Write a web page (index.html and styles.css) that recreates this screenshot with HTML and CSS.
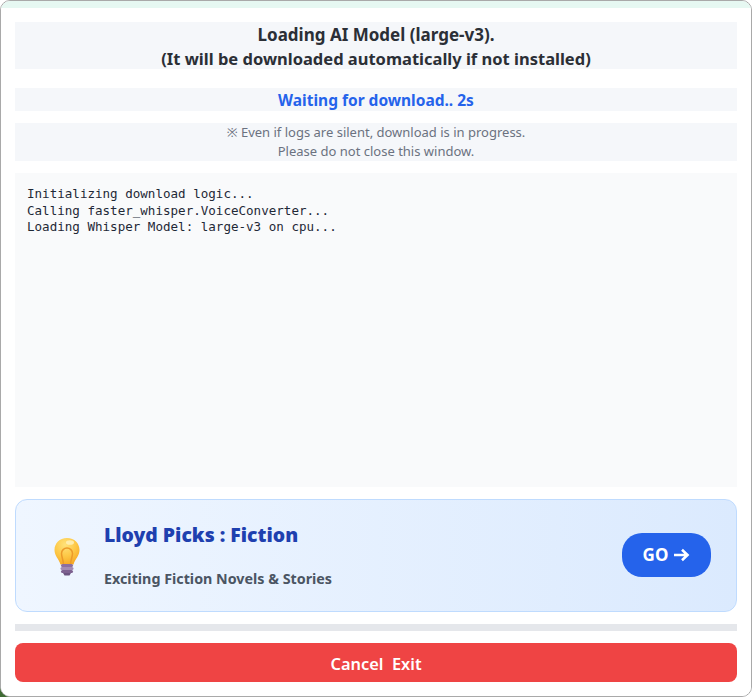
FILE: index.html
```html
<!DOCTYPE html>
<html lang="en">
<head>
<meta charset="utf-8">
<title>Loading AI Model</title>
<link rel="stylesheet" href="styles.css">
</head>
<body>
<main class="window">
  <div class="strip"></div>
  <div class="panel">
    <h1 class="title"><span class="title-first">Loading AI Model (large-v3).</span><br>(It will be downloaded automatically if not installed)</h1>
    <div class="status">Waiting for download.. 2s</div>
    <p class="note">※ Even if logs are silent, download is in progress.<br>Please do not close this window.</p>
    <pre class="log">Initializing download logic...
Calling faster_whisper.VoiceConverter...
Loading Whisper Model: large-v3 on cpu...</pre>
    <section class="promo">
      <svg class="bulb" viewBox="0 0 30 40" width="30" height="40" aria-hidden="true">
        <defs>
          <radialGradient id="glass" cx="0.42" cy="0.25" r="0.8">
            <stop offset="0" stop-color="#ffe27a"/>
            <stop offset="0.55" stop-color="#fdc745"/>
            <stop offset="1" stop-color="#f6a623"/>
          </radialGradient>
        </defs>
        <path d="M15 1C7.500 1 2.500 6.500 2.500 13c0 6 4.500 9 6 14.500h13C23 22 27.500 19 27.500 13 27.500 6.500 22.500 1 15 1z" fill="url(#glass)"/>
        <ellipse cx="18" cy="5.500" rx="4" ry="2.300" fill="#fff2bf" opacity="0.8"/>
        <path d="M11.500 27C11 22 9.500 19.500 9.500 16.500a5.500 5.500 0 0 1 11 0c0 3-1.500 5.500-2 10.500" fill="none" stroke="#ec9a2a" stroke-width="1.500"/>
        <rect x="9" y="27" width="12" height="3" rx="1.500" fill="#8d6fa0"/>
        <rect x="8.500" y="30" width="13" height="3" rx="1.500" fill="#a48bb3"/>
        <rect x="9" y="33" width="12" height="3" rx="1.500" fill="#7d6190"/>
        <path d="M11 36h8l-1.500 2.500h-5z" fill="#6b5480"/>
      </svg>
      <div class="promo-text">
        <h2 class="promo-title">Lloyd Picks : Fiction</h2>
        <p class="promo-sub">Exciting Fiction Novels &amp; Stories</p>
      </div>
      <button class="go" type="button">GO
        <svg class="go-arrow" viewBox="0 0 17 14" width="17" height="14" aria-hidden="true"><path d="M1 7h13.500M9 1.800 14.500 7 9 12.200" fill="none" stroke="#fff" stroke-width="2.600"/></svg>
      </button>
    </section>
    <div class="bar"></div>
    <button class="cancel" type="button">Cancel&nbsp; Exit</button>
  </div>
</main>
</body>
</html>
```
FILE: styles.css
```css
* { box-sizing: border-box; }
html, body { height: 100%; }
body {
  margin: 0;
  background: #fff linear-gradient(#3f6b34, #3f6b34) left bottom / 10px 10px no-repeat;
  font-family: "Noto Sans", "Open Sans", sans-serif;
  overflow: hidden;
}
.window {
  height: 697px;
  border: 1px solid #a9a9a9;
  border-radius: 10px;
  overflow: hidden;
  background: #fff;
  display: flex;
  flex-direction: column;
}
.strip { height: 7px; background: #e6f8f2; flex: none; }
.panel {
  flex: 1;
  padding: 14px;
  display: flex;
  flex-direction: column;
  background: #fff;
}
.title {
  margin: 0 0 19px;
  height: 47px;
  padding-top: 1px;
  background: #f5f7fa;
  color: #2b2f36;
  font-size: 16.500px;
  line-height: 23.500px;
  font-weight: 700;
  text-align: center;
}
.title-first { font-size: 17px; }
.status {
  height: 23px;
  margin-bottom: 12px;
  background: #f5f7fa;
  color: #2563eb;
  font-size: 15.500px;
  line-height: 24px;
  font-weight: 700;
  text-align: center;
}
.note {
  margin: 0 0 12px;
  height: 38px;
  background: #f5f7fa;
  color: #6b7280;
  font-size: 13px;
  line-height: 19px;
  text-align: center;
}
.log {
  margin: 0 0 12px;
  height: 314px;
  padding: 13px 12px 12px;
  background: #f9fafb;
  color: #1f2937;
  font-family: "DejaVu Sans Mono", monospace;
  font-size: 12.560px;
  line-height: 16.500px;
  overflow: hidden;
}
.promo {
  height: 113px;
  margin-bottom: 12px;
  padding: 0 25px 2px 36px;
  display: flex;
  align-items: center;
  gap: 22px;
  border: 1px solid #bfdbfe;
  border-radius: 12px;
  background: linear-gradient(90deg, #eff6ff, #dbeafe);
}
.bulb { flex: none; margin-top: 5px; }
.promo-text { flex: 1; padding-top: 1px; }
.promo-title {
  margin: 0 0 21px;
  color: #1e40af;
  font-size: 19.400px;
  line-height: 26px;
  font-weight: 900;
}
.promo-sub {
  margin: 0;
  color: #4b5563;
  font-size: 14.300px;
  line-height: 20px;
  font-weight: 700;
}
.go {
  flex: none;
  width: 89px;
  height: 44px;
  padding: 0;
  border: 0;
  border-radius: 20px;
  background: #2563eb;
  color: #fff;
  font: 700 17px/44px "Noto Sans", sans-serif;
  display: flex;
  align-items: center;
  justify-content: center;
  gap: 5px;
}
.go-arrow { flex: none; }
.bar { height: 7px; margin-bottom: 12px; background: #e5e7eb; flex: none; }
.cancel {
  height: 39px;
  border: 0;
  border-radius: 8px;
  background: #ef4444;
  color: #fff;
  font: 600 16.400px/42px "Noto Sans", sans-serif;
  padding: 0;
}
```
